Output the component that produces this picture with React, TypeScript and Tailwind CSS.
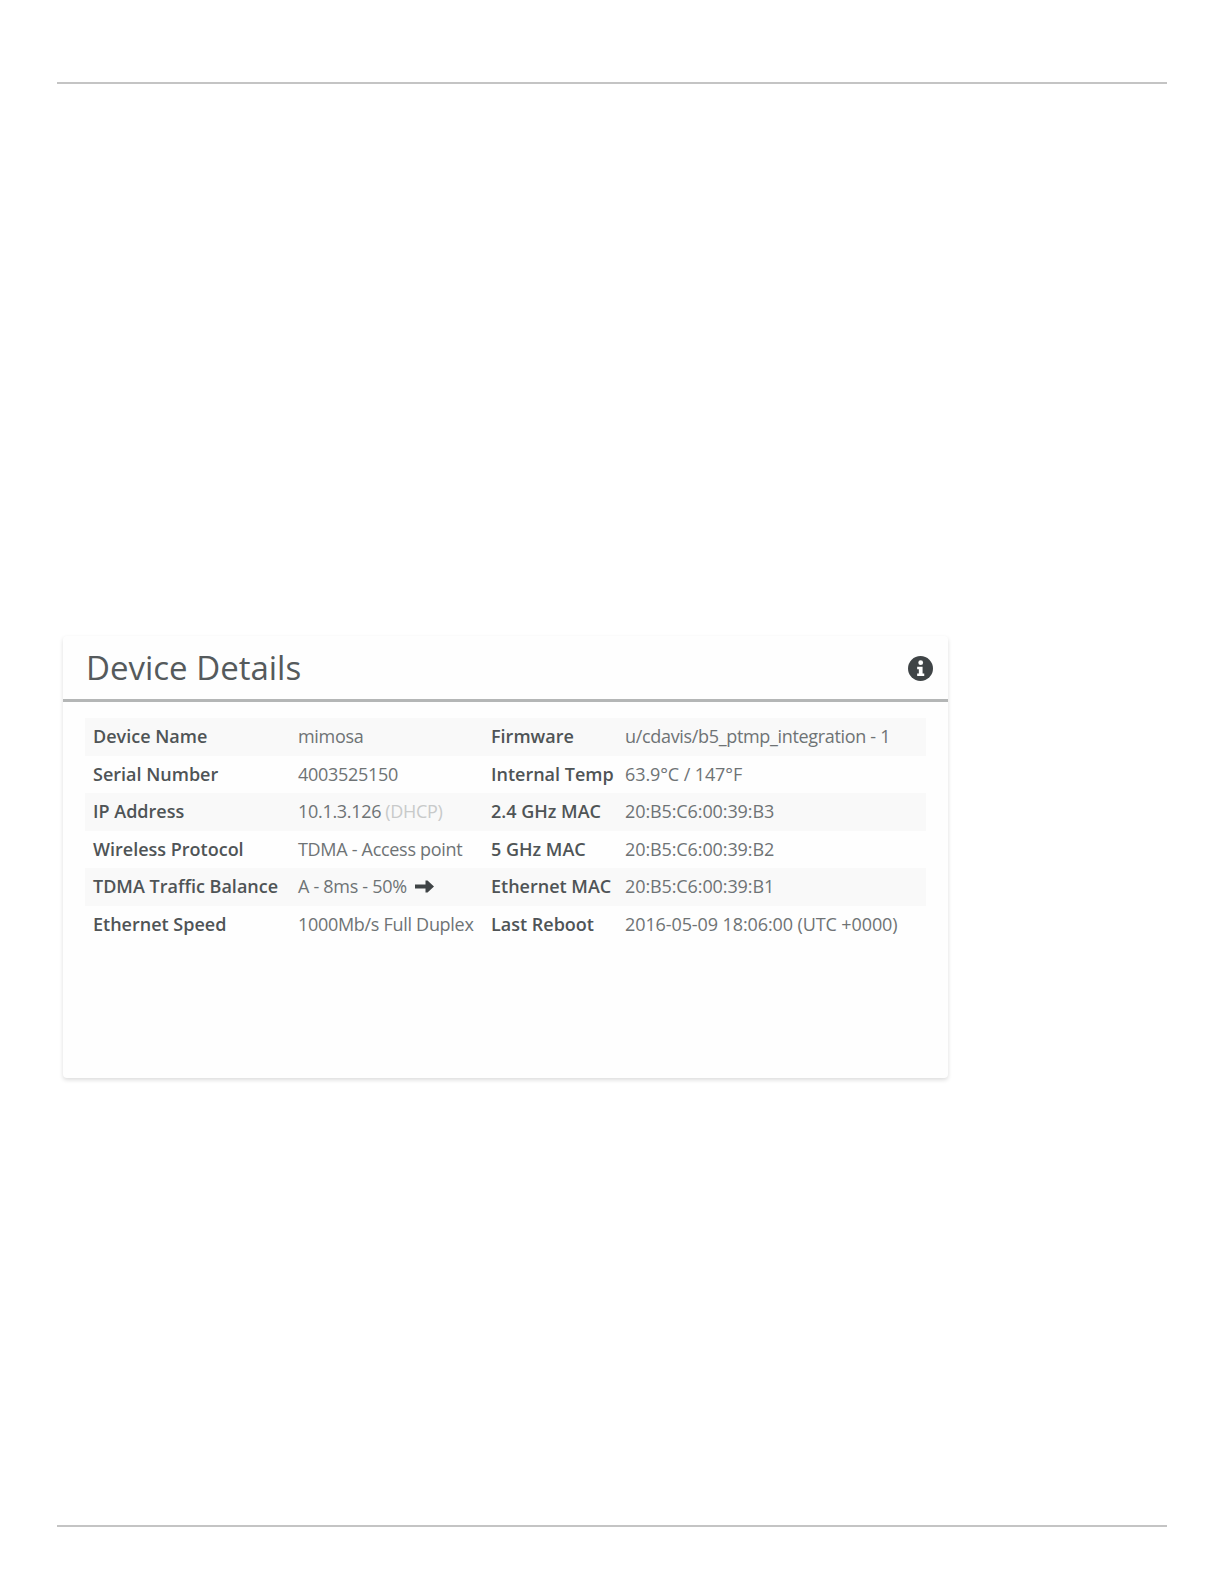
const rows = [
  { label: 'Device Name', value: 'mimosa', label2: 'Firmware', value2: 'u/cdavis/b5_ptmp_integration - 1', tight: true },
  { label: 'Serial Number', value: '4003525150', label2: 'Internal Temp', value2: '63.9°C / 147°F' },
  { label: 'IP Address', value: '10.1.3.126', note: '(DHCP)', label2: '2.4 GHz MAC', value2: '20:B5:C6:00:39:B3' },
  { label: 'Wireless Protocol', value: 'TDMA - Access point', label2: '5 GHz MAC', value2: '20:B5:C6:00:39:B2' },
  { label: 'TDMA Traffic Balance', value: 'A - 8ms - 50%', arrow: true, label2: 'Ethernet MAC', value2: '20:B5:C6:00:39:B1' },
  { label: 'Ethernet Speed', value: '1000Mb/s Full Duplex', label2: 'Last Reboot', value2: '2016-05-09 18:06:00 (UTC +0000)' },
];

export default function App() {
  return (
    <div className="w-[1224px] h-[1584px] bg-white px-[57px] pt-[82px] font-['Open_Sans',sans-serif] overflow-hidden">
      <div className="h-[2px] bg-[#c4c4c4]" />

      {/* Device details card */}
      <div className="mt-[552px] ml-[6px] w-[885px] h-[442px] bg-[#fefefe] rounded-[4px] shadow-[0_2px_4px_rgba(0,0,0,0.14)]">
        <div className="h-[66px] border-b-[3px] border-[#b4b6b6] pl-[23px] pr-[15px] flex items-center justify-between">
          <h2 className="text-[33px] leading-none text-[#555a5c]">Device Details</h2>
          <svg width="25" height="25" viewBox="0 0 24 24" className="mt-[2px]">
            <circle cx="12" cy="12" r="12" fill="#3f4446" />
            <circle cx="12.2" cy="6.4" r="2.3" fill="#fff" />
            <path d="M8.8 10.4h5.2v6.4h1.6v2.4H8.8v-2.4h1.6v-4H8.8z" fill="#fff" />
          </svg>
        </div>

        <div className="mt-[16px] mx-[22px]">
          {rows.map((row, i) => (
            <div
              key={row.label}
              className={`h-[37.5px] flex items-center text-[18px] ${i % 2 === 0 ? 'bg-[#f9f9f9]' : ''}`}
            >
              <div className="w-[213px] pl-[8px] font-semibold text-[#4f5456] whitespace-nowrap">{row.label}</div>
              <div className="w-[193px] tracking-[-0.3px] text-[#6e7375] whitespace-nowrap flex items-center">
                {row.value}
                {row.note && <span className="ml-[4px] text-[#c8caca]">{row.note}</span>}
                {row.arrow && (
                  <svg width="19" height="13" viewBox="0 0 19 13" className="ml-[8px]">
                    <path d="M0 4.5h10.5V0.5h2L19 6.5l-6.5 6h-2v-4H0z" fill="#3f4446" />
                  </svg>
                )}
              </div>
              <div className="w-[134px] font-semibold text-[#4f5456] whitespace-nowrap">{row.label2}</div>
              <div className={`text-[#6e7375] whitespace-nowrap ${row.tight ? 'tracking-[-0.33px]' : 'tracking-[-0.1px]'}`}>
                {row.value2}
              </div>
            </div>
          ))}
        </div>
      </div>

      <div className="mt-[447px] h-[2px] bg-[#c4c4c4]" />
    </div>
  );
}
